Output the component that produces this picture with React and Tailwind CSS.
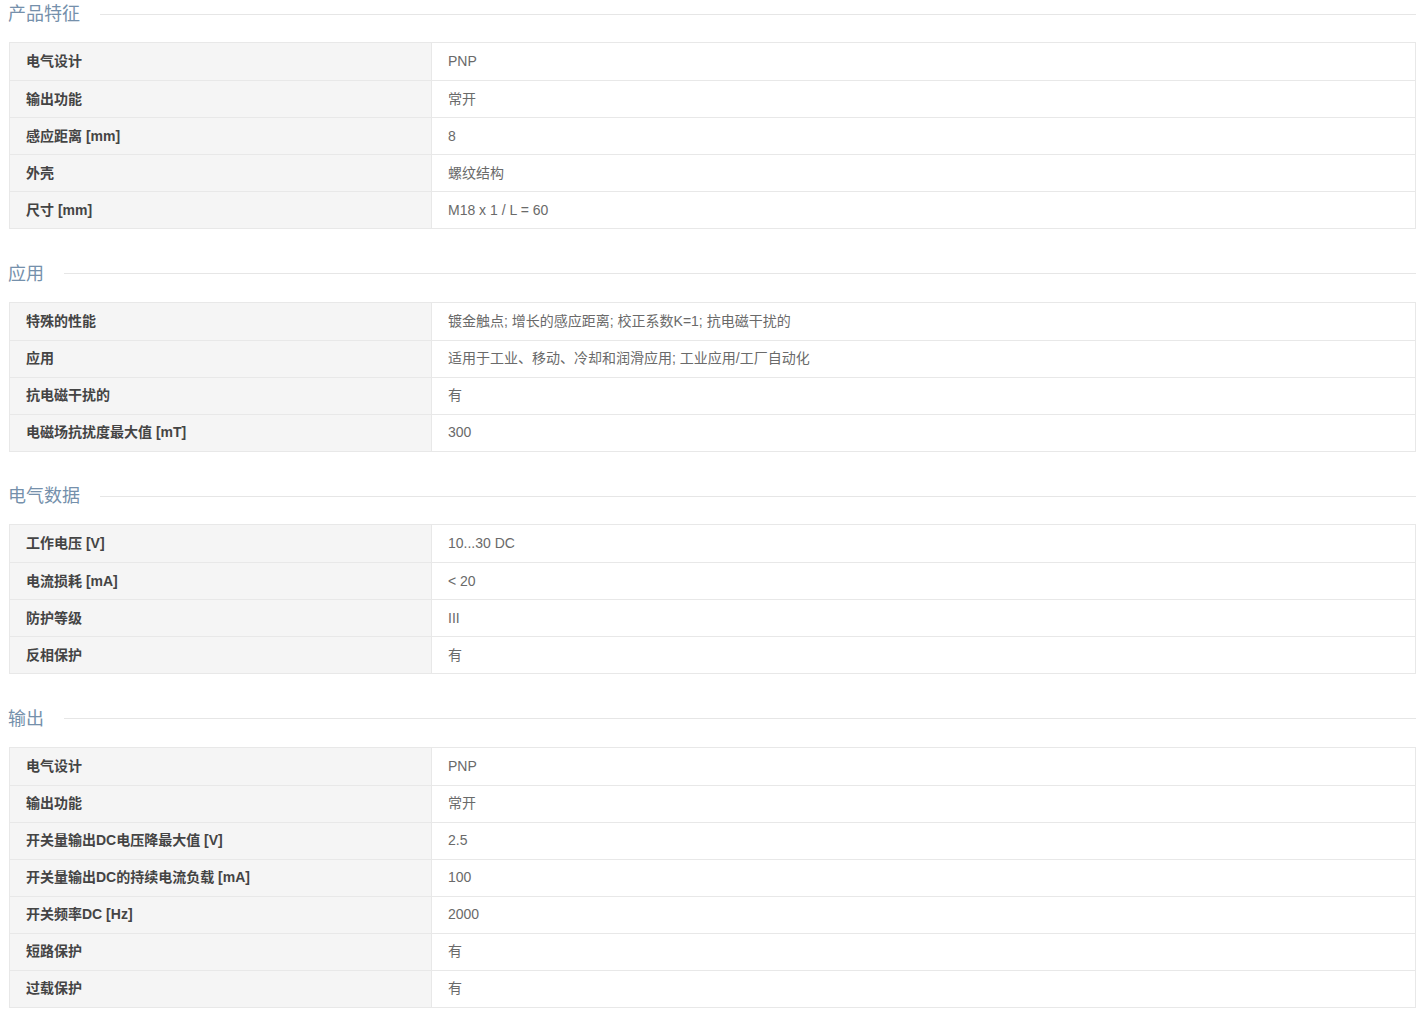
const SECTIONS = [
  {
    title: '产品特征',
    rows: [
      ['电气设计', 'PNP'],
      ['输出功能', '常开'],
      ['感应距离 [mm]', '8'],
      ['外壳', '螺纹结构'],
      ['尺寸 [mm]', 'M18 x 1 / L = 60'],
    ],
  },
  {
    title: '应用',
    rows: [
      ['特殊的性能', '镀金触点; 增长的感应距离; 校正系数K=1; 抗电磁干扰的'],
      ['应用', '适用于工业、移动、冷却和润滑应用; 工业应用/工厂自动化'],
      ['抗电磁干扰的', '有'],
      ['电磁场抗扰度最大值 [mT]', '300'],
    ],
  },
  {
    title: '电气数据',
    rows: [
      ['工作电压 [V]', '10...30 DC'],
      ['电流损耗 [mA]', '< 20'],
      ['防护等级', 'III'],
      ['反相保护', '有'],
    ],
  },
  {
    title: '输出',
    rows: [
      ['电气设计', 'PNP'],
      ['输出功能', '常开'],
      ['开关量输出DC电压降最大值 [V]', '2.5'],
      ['开关量输出DC的持续电流负载 [mA]', '100'],
      ['开关频率DC [Hz]', '2000'],
      ['短路保护', '有'],
      ['过载保护', '有'],
    ],
  },
]

function Section({ title, rows, first }) {
  return (
    <section className={first ? '' : 'mt-[30.5px]'}>
      {/* heading with rule */}
      <div className="flex items-center h-7 pl-2 pr-[7px]">
        <h2 className="text-[18px] leading-7 text-[#7590ab] font-normal whitespace-nowrap">{title}</h2>
        <div className="flex-1 ml-5 h-px bg-[#e6e6e6]" />
      </div>

      <div className="mt-[14px] ml-[9px] mr-[7px] border border-[#e8e8e8]">
        {rows.map(([label, value], i) => (
          <div key={i} className={`flex h-[37px] ${i > 0 ? 'border-t border-[#e8e8e8]' : ''}`}>
            <div className="w-[422px] shrink-0 bg-[#f5f5f5] border-r border-[#e8e8e8] pl-4 flex items-center text-[14px] font-bold text-[#444]">
              {label}
            </div>
            <div className="flex-1 pl-4 flex items-center text-[14px] text-[#6a6a6a]">{value}</div>
          </div>
        ))}
      </div>
    </section>
  )
}

export default function App() {
  return (
    <div className="bg-white min-h-screen" style={{ fontFamily: '"Liberation Sans", "Noto Sans CJK SC", sans-serif' }}>
      {SECTIONS.map((s, i) => (
        <Section key={s.title} title={s.title} rows={s.rows} first={i === 0} />
      ))}
    </div>
  )
}
